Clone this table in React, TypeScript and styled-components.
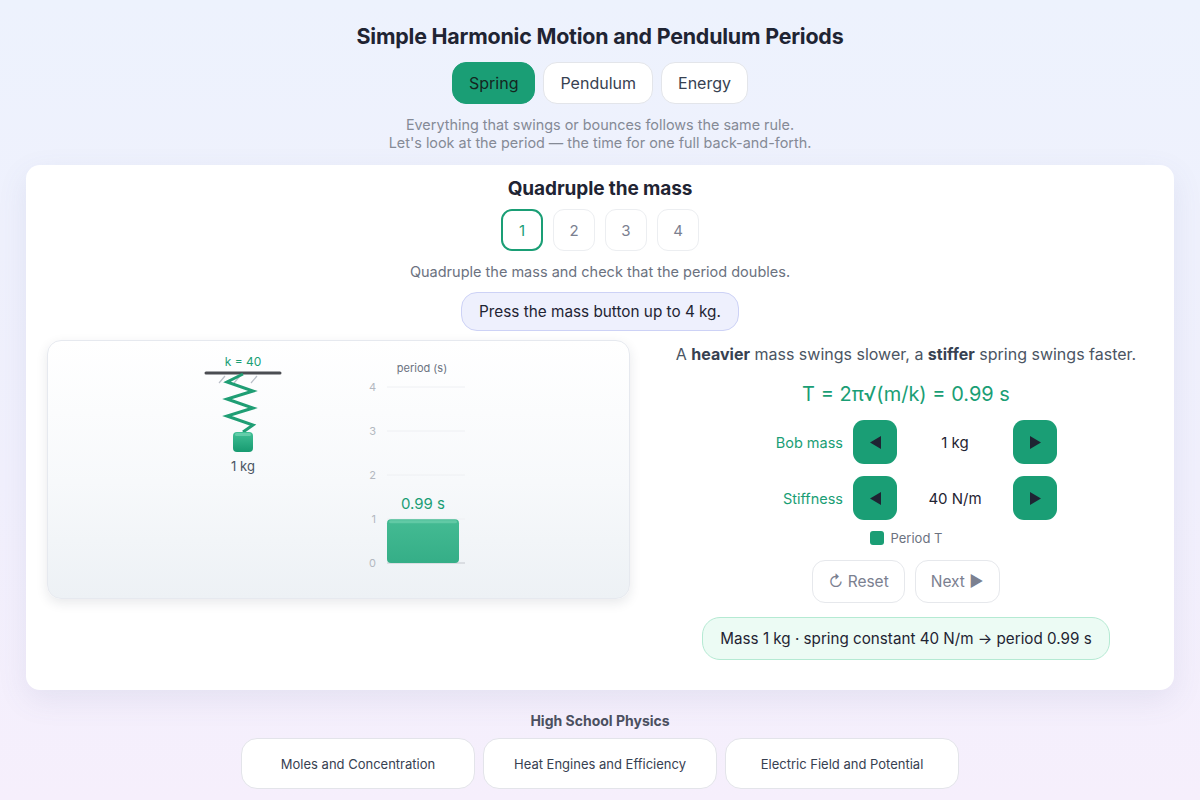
import { useState } from 'react';
import styled, { createGlobalStyle } from 'styled-components';

const GREEN = '#1a9e75';

const GlobalStyle = createGlobalStyle`
    body {
        margin: 0;
        font-family: Inter, "Noto Sans", sans-serif;
        background: linear-gradient(180deg, #edf2fd 0%, #f1f0fd 60%, #f6effc 100%);
        min-height: 800px;
        color: #1f2937;
    }
`;

const Page = styled.div`
    display: flex;
    flex-direction: column;
    align-items: center;
    padding-top: 22px;
`;

const Title = styled.h1`
    margin: 0;
    font-size: 21.4px;
    line-height: 28px;
    font-weight: 700;
    color: #1f2433;
    letter-spacing: -0.2px;
`;

const Tabs = styled.div`
    display: flex;
    gap: 8px;
    margin-top: 12px;
`;

const Tab = styled.button<{ $active?: boolean }>`
    height: 42px;
    padding: 0 16px;
    border-radius: 14px;
    font-family: inherit;
    font-size: 16px;
    cursor: pointer;
    color: ${p => (p.$active ? '#14261f' : '#374151')};
    background: ${p => (p.$active ? GREEN : '#fff')};
    border: 1.5px solid ${p => (p.$active ? GREEN : '#e3e5ea')};
`;

const Intro = styled.p`
    margin: 12px 0 0;
    font-size: 14.4px;
    line-height: 18px;
    color: #858a96;
    text-align: center;
`;

const Card = styled.section`
    align-self: stretch;
    margin: 13px 26px 0;
    background: #fff;
    border-radius: 14px;
    box-shadow: 0 10px 30px rgba(90, 95, 150, 0.1);
    padding: 12px 21px 30px;
    display: flex;
    flex-direction: column;
    align-items: center;
`;

const StepTitle = styled.h2`
    margin: 0;
    font-size: 19px;
    line-height: 24px;
    font-weight: 700;
    color: #1f2433;
    letter-spacing: -0.1px;
`;

const Steps = styled.div`
    display: flex;
    gap: 10px;
    margin-top: 8px;
`;

const Step = styled.button<{ $active?: boolean }>`
    width: 42px;
    height: 42px;
    border-radius: 11px;
    background: #fff;
    font-family: inherit;
    font-size: 15px;
    cursor: pointer;
    color: ${p => (p.$active ? GREEN : '#7b8090')};
    border: ${p => (p.$active ? `2px solid ${GREEN}` : '1.5px solid #eceef1')};
`;

const Instruction = styled.p`
    margin: 11px 0 0;
    font-size: 14.5px;
    line-height: 20px;
    color: #6b7280;
`;

const Hint = styled.div`
    margin-top: 10px;
    height: 37px;
    padding: 0 17px;
    display: flex;
    align-items: center;
    border-radius: 16px;
    background: #eef0fd;
    border: 1.5px solid #cdd2f6;
    font-size: 15.3px;
    color: #1f2433;
`;

const Main = styled.div`
    align-self: stretch;
    margin-top: 9px;
    display: grid;
    grid-template-columns: 583px 1fr;
    gap: 20px;
`;

const Stage = styled.div`
    height: 257px;
    border-radius: 14px;
    border: 1px solid #e6e9ef;
    background: linear-gradient(180deg, #ffffff 0%, #f7f9fb 55%, #edf1f5 100%);
    box-shadow: 0 4px 12px rgba(30, 40, 60, 0.1);
    overflow: hidden;
`;

const Side = styled.div`
    display: flex;
    flex-direction: column;
    align-items: center;
    padding-left: 9px;
`;

const Lead = styled.p`
    margin: 3px 0 0;
    font-size: 16px;
    line-height: 22px;
    color: #4b5563;

    b {
        color: #374151;
        font-weight: 700;
    }
`;

const Formula = styled.div`
    margin-top: 16px;
    font-size: 20px;
    line-height: 26px;
    color: ${GREEN};
`;

const Controls = styled.div`
    margin-top: 13px;
    display: grid;
    grid-template-columns: 88px 44px 96px 44px;
    column-gap: 10px;
    row-gap: 12px;
    align-items: center;
`;

const ControlLabel = styled.span`
    text-align: right;
    font-size: 14.5px;
    color: ${GREEN};
`;

const ArrowButton = styled.button`
    width: 44px;
    height: 44px;
    border: none;
    border-radius: 11px;
    background: ${GREEN};
    display: flex;
    align-items: center;
    justify-content: center;
    cursor: pointer;
    padding: 0;
`;

const Value = styled.span`
    text-align: center;
    font-size: 15px;
    color: #1f2433;
`;

const Legend = styled.div`
    margin-top: 10px;
    display: flex;
    align-items: center;
    gap: 7px;
    font-size: 13px;
    color: #6b7280;
`;

const Swatch = styled.span`
    width: 14px;
    height: 14px;
    border-radius: 3px;
    background: ${GREEN};
`;

const Actions = styled.div`
    margin-top: 14px;
    display: flex;
    gap: 10px;
`;

const ActionButton = styled.button`
    height: 43px;
    padding: 0 15px;
    border-radius: 13px;
    border: 1.5px solid #e6e8ec;
    background: #fff;
    font-family: inherit;
    font-size: 15.5px;
    color: #7b8090;
    display: flex;
    align-items: center;
    gap: 5px;
    cursor: pointer;
`;

const Result = styled.div`
    margin-top: 14px;
    height: 41px;
    padding: 0 17px;
    display: flex;
    align-items: center;
    border-radius: 18px;
    background: #ecfbf4;
    border: 1.5px solid #b5ead3;
    font-size: 15.2px;
    color: #1f2433;
`;

const Footer = styled.footer`
    margin-top: 22px;
    display: flex;
    flex-direction: column;
    align-items: center;
`;

const FooterTitle = styled.h3`
    margin: 0;
    font-size: 14px;
    line-height: 18px;
    font-weight: 700;
    color: #4b5060;
`;

const Related = styled.div`
    display: flex;
    gap: 8px;
    margin-top: 8px;
`;

const RelatedCard = styled.a`
    width: 234px;
    height: 51px;
    box-sizing: border-box;
    display: flex;
    align-items: center;
    justify-content: center;
    border-radius: 16px;
    background: #fff;
    border: 1.5px solid #e3e4ea;
    font-size: 13px;
    color: #374151;
    text-decoration: none;
`;

function Triangle({ dir }: { dir: 'left' | 'right' }) {
    const pts = dir === 'left' ? '1,6.5 12,0 12,13' : '1,0 12,6.5 1,13';
    return (
        <svg width="13" height="13" viewBox="0 0 13 13">
            <polygon points={pts} fill="#1f2433" strokeLinejoin="round" />
        </svg>
    );
}

function SpringScene({ mass, k, period }: { mass: number; k: number; period: number }) {
    const scale = 44;
    const base = 222;
    const barTop = base - period * scale;
    const coil = '195,33 179,41 205,50 179,58 205,67 179,75 205,84 195,91';

    return (
        <svg width="583" height="257" viewBox="0 0 583 257" fontFamily="Inter, sans-serif">
            <defs>
                <linearGradient id="bob" x1="0" y1="0" x2="0" y2="1">
                    <stop offset="0" stopColor="#41c096" />
                    <stop offset="1" stopColor="#179a70" />
                </linearGradient>
                <linearGradient id="bar" x1="0" y1="0" x2="0" y2="1">
                    <stop offset="0" stopColor="#44bb93" />
                    <stop offset="1" stopColor="#35ae87" />
                </linearGradient>
            </defs>

            {/* spring */}
            <text x="195" y="25" textAnchor="middle" fontSize="12" fill={GREEN}>k = {k}</text>
            <line x1="171" y1="42" x2="177" y2="35" stroke="#b9bec6" strokeWidth="1.2" />
            <line x1="186" y1="42" x2="192" y2="35" stroke="#b9bec6" strokeWidth="1.2" />
            <line x1="203" y1="42" x2="209" y2="35" stroke="#b9bec6" strokeWidth="1.2" />
            <line x1="158" y1="32" x2="232" y2="32" stroke="#4b4d52" strokeWidth="3" strokeLinecap="round" />
            <polyline points={coil} fill="none" stroke="#1f9e74" strokeWidth="3" strokeLinejoin="miter" />
            <rect x="185" y="91" width="20" height="20" rx="4" fill="url(#bob)" />
            <rect x="187" y="92" width="16" height="3" rx="1.5" fill="#7fd9b9" opacity="0.6" />
            <text x="195" y="130" textAnchor="middle" fontSize="13" fill="#4b5563">{mass} kg</text>

            {/* chart */}
            <text x="374" y="31" textAnchor="middle" fontSize="11" fill="#6b7280">period (s)</text>
            {[4, 3, 2, 1].map(v => (
                <g key={v}>
                    <line x1="339" y1={base - v * scale} x2="417" y2={base - v * scale} stroke="#eef0f3" />
                    <text x="328" y={base - v * scale + 4} textAnchor="end" fontSize="11" fill="#b3b8c0">{v}</text>
                </g>
            ))}
            <line x1="339" y1={base} x2="417" y2={base} stroke="#c3c7cd" strokeWidth="1.2" />
            <text x="328" y={base + 4} textAnchor="end" fontSize="11" fill="#b3b8c0">0</text>
            <rect x="339" y={barTop} width="72" height={base - barTop} rx="4" fill="url(#bar)" />
            <rect x="341" y={barTop + 1} width="68" height="3" rx="1.5" fill="#7fd7b7" opacity="0.5" />
            <text x="375" y={barTop - 10} textAnchor="middle" fontSize="15" fill={GREEN}>{period.toFixed(2)} s</text>
        </svg>
    );
}

export default function App() {
    const [tab, setTab] = useState('Spring');
    const [step, setStep] = useState(1);
    const [mass, setMass] = useState(1);
    const [k, setK] = useState(40);
    const period = 2 * Math.PI * Math.sqrt(mass / k);

    return (
        <Page>
            <GlobalStyle />
            <Title>Simple Harmonic Motion and Pendulum Periods</Title>
            <Tabs>
                {['Spring', 'Pendulum', 'Energy'].map(t => (
                    <Tab key={t} $active={tab === t} onClick={() => setTab(t)}>{t}</Tab>
                ))}
            </Tabs>
            <Intro>
                Everything that swings or bounces follows the same rule.<br />
                Let's look at the period — the time for one full back-and-forth.
            </Intro>

            <Card>
                <StepTitle>Quadruple the mass</StepTitle>
                <Steps>
                    {[1, 2, 3, 4].map(n => (
                        <Step key={n} $active={step === n} onClick={() => setStep(n)}>{n}</Step>
                    ))}
                </Steps>
                <Instruction>Quadruple the mass and check that the period doubles.</Instruction>
                <Hint>Press the mass button up to 4 kg.</Hint>

                <Main>
                    <Stage>
                        <SpringScene mass={mass} k={k} period={period} />
                    </Stage>
                    <Side>
                        <Lead>
                            A <b>heavier</b> mass swings slower, a <b>stiffer</b> spring swings faster.
                        </Lead>
                        <Formula>T = 2π√(m/k) = {period.toFixed(2)} s</Formula>
                        <Controls>
                            <ControlLabel>Bob mass</ControlLabel>
                            <ArrowButton onClick={() => setMass(Math.max(1, mass - 1))}><Triangle dir="left" /></ArrowButton>
                            <Value>{mass} kg</Value>
                            <ArrowButton onClick={() => setMass(Math.min(4, mass + 1))}><Triangle dir="right" /></ArrowButton>

                            <ControlLabel>Stiffness</ControlLabel>
                            <ArrowButton onClick={() => setK(Math.max(10, k - 10))}><Triangle dir="left" /></ArrowButton>
                            <Value>{k} N/m</Value>
                            <ArrowButton onClick={() => setK(Math.min(100, k + 10))}><Triangle dir="right" /></ArrowButton>
                        </Controls>
                        <Legend>
                            <Swatch />
                            Period T
                        </Legend>
                        <Actions>
                            <ActionButton onClick={() => { setMass(1); setK(40); }}>↻ Reset</ActionButton>
                            <ActionButton onClick={() => setStep(Math.min(4, step + 1))}>Next ▶</ActionButton>
                        </Actions>
                        <Result>
                            Mass {mass} kg · spring constant {k} N/m → period {period.toFixed(2)} s
                        </Result>
                    </Side>
                </Main>
            </Card>

            <Footer>
                <FooterTitle>High School Physics</FooterTitle>
                <Related>
                    <RelatedCard href="#">Moles and Concentration</RelatedCard>
                    <RelatedCard href="#">Heat Engines and Efficiency</RelatedCard>
                    <RelatedCard href="#">Electric Field and Potential</RelatedCard>
                </Related>
            </Footer>
        </Page>
    );
}
